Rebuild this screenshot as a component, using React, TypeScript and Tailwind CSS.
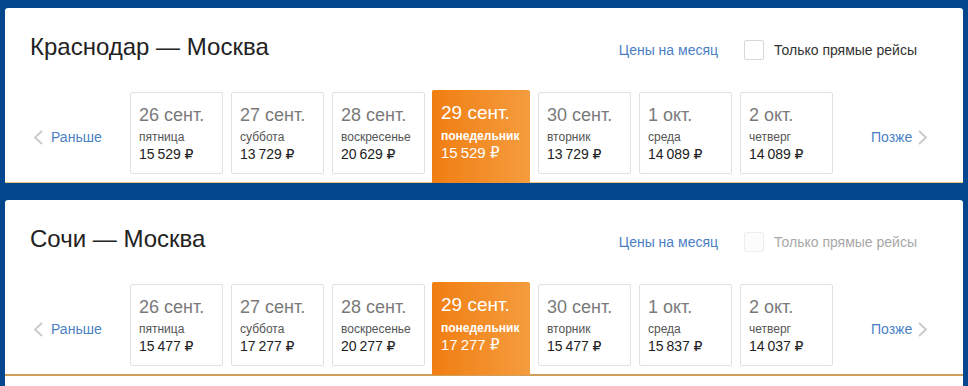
import React from "react";

type Day = { date: string; dow: string; price: string; sel?: boolean };

const days1: Day[] = [
  { date: "26 сент.", dow: "пятница", price: "15\u2009529 ₽" },
  { date: "27 сент.", dow: "суббота", price: "13\u2009729 ₽" },
  { date: "28 сент.", dow: "воскресенье", price: "20\u2009629 ₽" },
  { date: "29 сент.", dow: "понедельник", price: "15\u2009529 ₽", sel: true },
  { date: "30 сент.", dow: "вторник", price: "13\u2009729 ₽" },
  { date: "1 окт.", dow: "среда", price: "14\u2009089 ₽" },
  { date: "2 окт.", dow: "четверг", price: "14\u2009089 ₽" },
];

const days2: Day[] = [
  { date: "26 сент.", dow: "пятница", price: "15\u2009477 ₽" },
  { date: "27 сент.", dow: "суббота", price: "17\u2009277 ₽" },
  { date: "28 сент.", dow: "воскресенье", price: "20\u2009277 ₽" },
  { date: "29 сент.", dow: "понедельник", price: "17\u2009277 ₽", sel: true },
  { date: "30 сент.", dow: "вторник", price: "15\u2009477 ₽" },
  { date: "1 окт.", dow: "среда", price: "15\u2009837 ₽" },
  { date: "2 окт.", dow: "четверг", price: "14\u2009037 ₽" },
];

const Chevron = ({ dir }: { dir: "l" | "r" }) => (
  <svg width="10" height="15" viewBox="0 0 10 15" className="shrink-0">
    <polyline
      points={dir === "l" ? "9,1 2,7.5 9,14" : "1,1 8,7.5 1,14"}
      fill="none"
      stroke="#c9c9c9"
      strokeWidth="1.8"
    />
  </svg>
);

function DayCard({ d }: { d: Day }) {
  if (d.sel) {
    return (
      <div className="relative z-10 ml-[-1px] h-[93px] w-[98px] shrink-0 rounded-t-[2px] bg-[linear-gradient(to_right,#f07e12,#f59c3e)] px-[9px] pt-[12px] text-white">
        <div className="text-[19px] leading-[21px]">{d.date}</div>
        <div className="mt-[6px] text-[12px] font-bold leading-[14px]">{d.dow}</div>
        <div className="mt-[1px] text-[15px] leading-[17px]">{d.price}</div>
      </div>
    );
  }
  return (
    <div className="mt-[2px] h-[82px] w-[93px] shrink-0 rounded-[2px] border border-[#dde2e8] bg-white px-[8px] pt-[12px]">
      <div className="text-[18px] leading-[21px] text-[#7a7a7a]">{d.date}</div>
      <div className="mt-[4px] text-[12px] leading-[14px] text-[#555]">{d.dow}</div>
      <div className="mt-[2px] text-[14px] leading-[16px] text-[#222]">{d.price}</div>
    </div>
  );
}

function Block({
  title,
  days,
  disabled,
  bottom,
}: {
  title: string;
  days: Day[];
  disabled?: boolean;
  bottom: "thin" | "thick";
}) {
  return (
    <div
      className={
        "mx-[5px] rounded-t-[3px] bg-white " +
        (bottom === "thin"
          ? "h-[175px] border-b border-[#f3c47c]"
          : "h-[176px] border-b-2 border-[#cf9f5b]")
      }
    >
      <div className="flex h-[58px] items-start pl-[25px] pr-[46px] pt-[20px]">
        <div className="text-[24px] leading-[38px] text-[#222]">{title}</div>
        <div className="ml-auto mt-[2px] flex h-[40px] items-center">
          <span className="text-[14px] text-[#4a7fc3]">Цены на месяц</span>
          <span
            className={
              "ml-[26px] h-[20px] w-[20px] rounded-[2px] border " +
              (disabled ? "border-[#eeeeee] bg-[#fcfcfc]" : "border-[#d6d6d6] bg-white")
            }
          />
          <span
            className={
              "ml-[10px] text-[14px] " + (disabled ? "text-[#a8a8a8]" : "text-[#333]")
            }
          >
            Только прямые рейсы
          </span>
        </div>
      </div>
      <div className="mt-[24px] flex items-start pl-[28px]">
        <div className="flex h-[94px] w-[97px] shrink-0 items-center gap-[8px]">
          <Chevron dir="l" />
          <span className="text-[14px] text-[#4a7fc3]">Раньше</span>
        </div>
        <div className="flex items-start gap-[8px]">
          {days.map((d, i) => (
            <DayCard key={i} d={d} />
          ))}
        </div>
        <div className="ml-[38px] flex h-[94px] items-center gap-[6px]">
          <span className="text-[14px] text-[#4a7fc3]">Позже</span>
          <Chevron dir="r" />
        </div>
      </div>
    </div>
  );
}

export default function App() {
  return (
    <div
      className="h-[386px] w-[968px] overflow-hidden bg-[#04478f] pt-[8px]"
      style={{ fontFamily: '"Liberation Sans", Arial, "DejaVu Sans", sans-serif' }}
    >
      <Block title="Краснодар — Москва" days={days1} bottom="thin" />
      <div className="h-[17px]" />
      <Block title="Сочи — Москва" days={days2} disabled bottom="thick" />
      <div className="mx-[5px] h-[40px] bg-white" />
    </div>
  );
}
